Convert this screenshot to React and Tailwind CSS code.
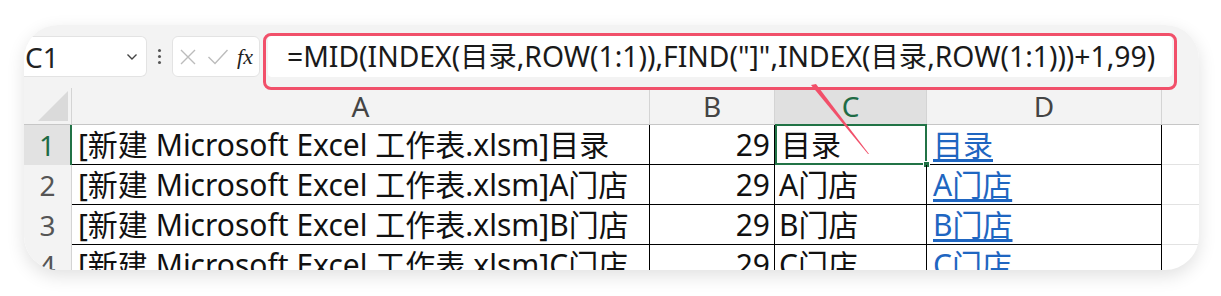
import React from 'react';

const FONT = { fontFamily: '"Noto Sans", "Noto Sans CJK SC", sans-serif' };

const rows = [
  { n: '1', a: '[新建 Microsoft Excel 工作表.xlsm]目录', c: '目录' },
  { n: '2', a: '[新建 Microsoft Excel 工作表.xlsm]A门店', c: 'A门店' },
  { n: '3', a: '[新建 Microsoft Excel 工作表.xlsm]B门店', c: 'B门店' },
  { n: '4', a: '[新建 Microsoft Excel 工作表.xlsm]C门店', c: 'C门店' },
];

const cols = 'grid grid-cols-[48px_578px_125px_152px_235px_1fr] leading-none';

const Toolbar = () => (
  <div className="flex items-center h-[63px] shrink-0 bg-[#f3f3f3] pt-[11px] pb-[11px] pr-[27px]">
    <div className="flex items-center w-[123px] h-[41px] bg-white rounded-r-md border border-l-0 border-[#e3e3e3]">
      <span className="text-[28px] text-[#222] ml-[1px] leading-none">C1</span>
      <svg className="ml-auto mr-[8px]" width="12" height="8" viewBox="0 0 12 8">
        <path d="M1.5 1.5 L6 6 L10.5 1.5" fill="none" stroke="#444" strokeWidth="1.4" />
      </svg>
    </div>
    <div className="flex flex-col gap-[3px] mx-[11px]">
      <span className="w-[3px] h-[3px] bg-[#555] rounded-full" />
      <span className="w-[3px] h-[3px] bg-[#555] rounded-full" />
      <span className="w-[3px] h-[3px] bg-[#555] rounded-full" />
    </div>
    <div className="flex items-center w-[88px] h-[41px] bg-white rounded-md border border-[#e3e3e3] px-[6px]">
      <svg width="18" height="18" viewBox="0 0 18 18">
        <path d="M2 2 L16 16 M16 2 L2 16" stroke="#bcbcbc" strokeWidth="1.4" />
      </svg>
      <svg className="ml-[10px]" width="22" height="18" viewBox="0 0 22 18">
        <path d="M1.5 9 L8 15.5 L20.5 2" fill="none" stroke="#bcbcbc" strokeWidth="1.4" />
      </svg>
      <span
        className="ml-auto text-[22px] italic text-[#222] leading-none"
        style={{ fontFamily: '"Liberation Serif", serif' }}
      >
        fx
      </span>
    </div>
    <div className="flex-1 flex items-center h-[41px] ml-[8px] bg-white rounded-sm pl-[19px]">
      <span className="text-[28.3px] text-[#1a1a1a] leading-none whitespace-nowrap">
        =MID(INDEX(目录,ROW(1:1)),FIND("]",INDEX(目录,ROW(1:1)))+1,99)
      </span>
    </div>
  </div>
);

const Header = () => (
  <div className={`${cols} h-[37px] shrink-0 bg-[#f3f3f3] border-b border-[#c6c6c6]`}>
    <div className="relative border-r border-[#d4d4d4]">
      <div className="absolute right-[3px] bottom-[3px] w-0 h-0 border-l-[30px] border-l-transparent border-b-[30px] border-b-[#dadada]" />
    </div>
    <div className="flex items-center justify-center text-[28px] text-[#444] border-r border-[#d4d4d4]">A</div>
    <div className="flex items-center justify-center text-[28px] text-[#444] border-r border-[#d4d4d4]">B</div>
    <div className="flex items-center justify-center text-[28px] text-[#1e6b45] bg-[#e0e0e0] border-r border-[#d4d4d4]">C</div>
    <div className="flex items-center justify-center text-[28px] text-[#444] border-r border-[#d4d4d4]">D</div>
    <div />
  </div>
);

const Row = ({ r, i }) => {
  const first = i === 0;
  return (
    <div className={`${cols} h-[40px] shrink-0`}>
      <div
        className={`flex items-center justify-center text-[28px] ${
          first ? 'bg-[#e2e2e2] text-[#1e6b45] border-r-2 border-[#217346]' : 'bg-[#f3f3f3] text-[#555] border-r border-[#d4d4d4]'
        }`}
      >
        {r.n}
      </div>
      <div className="flex items-center pl-[6px] text-[30px] text-[#111] border-r border-b border-black whitespace-nowrap overflow-hidden">
        {r.a}
      </div>
      <div className="flex items-center justify-end pr-[4px] text-[30px] text-[#111] border-r border-b border-black">29</div>
      <div
        className={`relative flex items-center pl-[4px] text-[30px] text-[#111] whitespace-nowrap ${
          first ? 'border-2 border-[#217346] -mt-px' : 'border-r border-b border-black'
        }`}
      >
        {r.c}
        {first && <span className="absolute -right-[5px] -bottom-[5px] w-[7px] h-[7px] bg-[#217346] border border-white" />}
      </div>
      <div className="flex items-center pl-[6px] text-[30px] text-[#1f66c1] underline underline-offset-[3px] border-r border-b border-black whitespace-nowrap">
        {r.c}
      </div>
      <div className="border-b border-[#e2e2e2]" />
    </div>
  );
};

export default function App() {
  return (
    <div className="w-[1221px] h-[296px] bg-white pt-[25px] pl-[24px]" style={FONT}>
      <div className="relative w-[1175px] h-[245px] rounded-[34px] overflow-hidden bg-white shadow-[0_6px_18px_rgba(0,0,0,0.12)] flex flex-col">
        <Toolbar />
        <Header />
        {rows.map((r, i) => (
          <Row key={r.n} r={r} i={i} />
        ))}
        <div className="absolute left-[239px] top-[8px] w-[914px] h-[57px] rounded-lg border-[3px] border-[#f1506a] pointer-events-none" />
        <svg className="absolute left-0 top-0 pointer-events-none" width="1175" height="245">
          <polygon points="787,60 792,59 845,129 844,129" fill="#f1506a" />
        </svg>
      </div>
    </div>
  );
}
